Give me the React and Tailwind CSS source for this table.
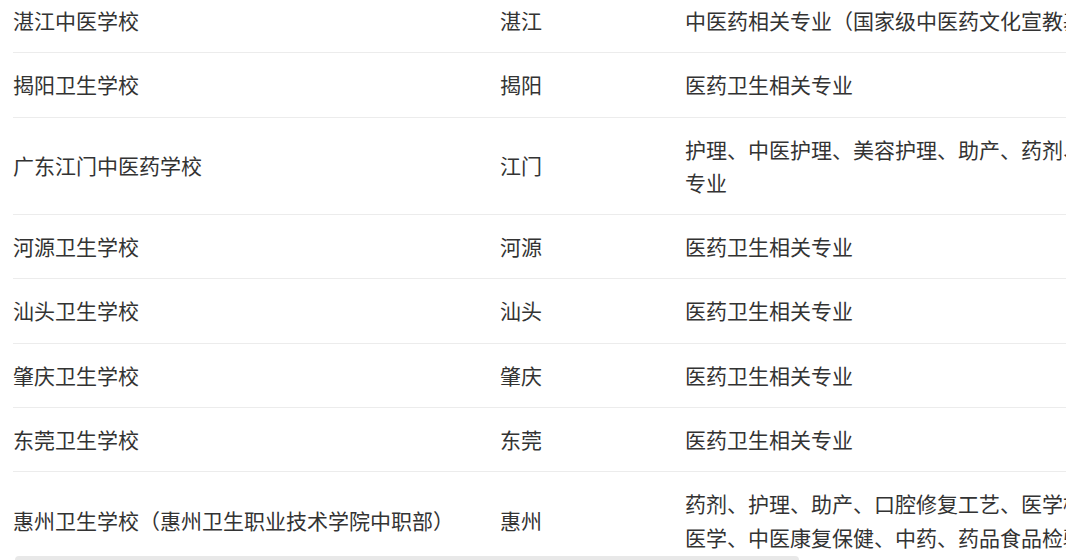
import React from 'react'

const ROWS = [
  ['湛江中医学校', '湛江', ['中医药相关专业（国家级中医药文化宣教基地）']],
  ['揭阳卫生学校', '揭阳', ['医药卫生相关专业']],
  ['广东江门中医药学校', '江门', ['护理、中医护理、美容护理、助产、药剂、康复技术、中药等医药卫生相关', '专业']],
  ['河源卫生学校', '河源', ['医药卫生相关专业']],
  ['汕头卫生学校', '汕头', ['医药卫生相关专业']],
  ['肇庆卫生学校', '肇庆', ['医药卫生相关专业']],
  ['东莞卫生学校', '东莞', ['医药卫生相关专业']],
  ['惠州卫生学校（惠州卫生职业技术学院中职部）', '惠州', ['药剂、护理、助产、口腔修复工艺、医学检验技术、中', '医学、中医康复保健、中药、药品食品检验等专业']],
]

export default function App() {
  return (
    <div
      className="relative h-[560px] w-[1080px] overflow-hidden bg-white text-[21px] text-[#333]"
      style={{ fontFamily: '"Noto Sans CJK SC", "Noto Sans", sans-serif' }}
    >
      {/* table is wider than its box, so the third column runs past the right edge */}
      <div className="ml-[13px] -mt-[11px] w-[1053px] overflow-hidden">
        <div className="w-[1400px]">
          {ROWS.map(([school, city, majors]) => (
            <div key={school} className="flex items-center border-b border-[#ececec] py-[15px] leading-[33.3px]">
              <div className="w-[487px] shrink-0 whitespace-nowrap">{school}</div>
              <div className="w-[185px] shrink-0 whitespace-nowrap">{city}</div>
              <div className="flex-1">
                {majors.map(line => (
                  <div key={line} className="whitespace-nowrap">{line}</div>
                ))}
              </div>
            </div>
          ))}
        </div>
      </div>
      <div className="absolute left-[15px] top-[556px] h-[8px] w-[784px] rounded-[4px] bg-[#e8e8e8]" />
    </div>
  )
}
